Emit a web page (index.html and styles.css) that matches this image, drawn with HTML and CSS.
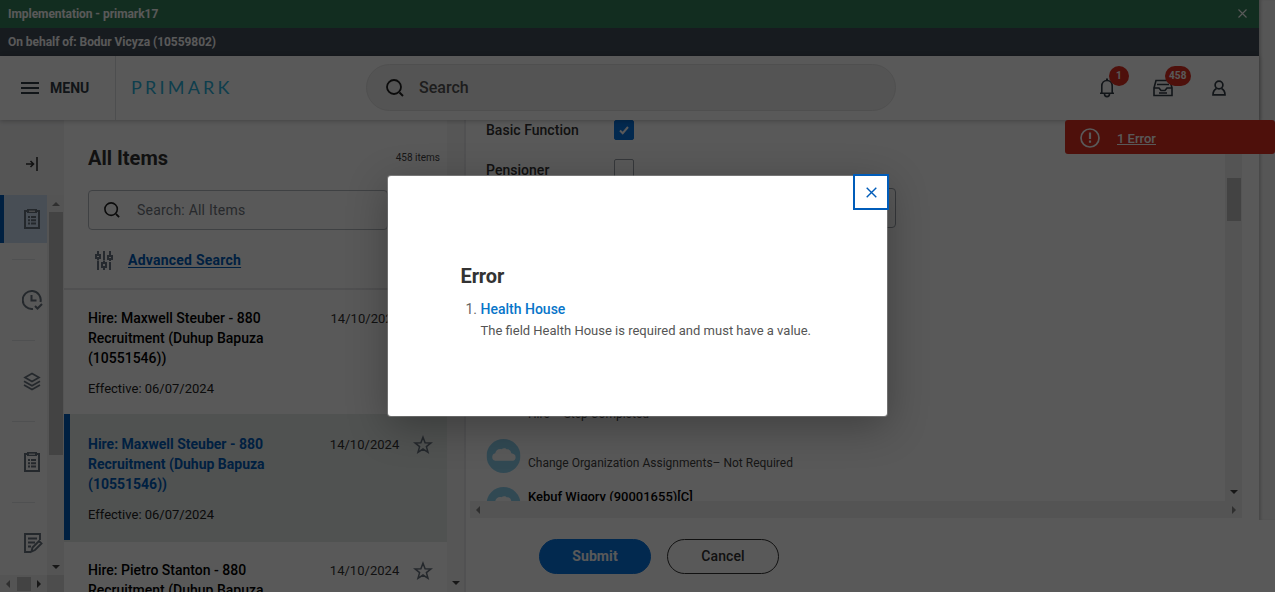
FILE: index.html
```html
<!DOCTYPE html>
<html lang="en">
<head>
<meta charset="utf-8">
<title>All Items</title>
<link rel="stylesheet" href="styles.css">
</head>
<body>
<svg class="defs" width="0" height="0">
  <symbol id="clipboard" viewBox="0 0 18 22"><path fill="none" stroke="currentColor" stroke-width="2" d="M2 3h14v17H2z"/><path fill="currentColor" d="M4 1h10v4H4zM5 8h2v2H5zM8 8h5v2H8zM5 11.3h2v2H5zM8 11.3h5v2H8zM5 14.6h2v2H5zM8 14.6h5v2H8z"/><path stroke="#fff" stroke-width="1" d="M6 3.2h6"/></symbol>
  <symbol id="star" viewBox="0 0 20 20"><path fill="none" stroke="currentColor" stroke-width="1.5" stroke-linejoin="miter" d="M10 2.200l2.100 5.500 5.900.2-4.600 3.700 1.600 5.700-5-3.300-5 3.300 1.600-5.700L2 7.900l5.900-.2z"/></symbol>
  <symbol id="lens" viewBox="0 0 18 18"><circle cx="8" cy="8" r="7" fill="none" stroke="currentColor" stroke-width="1.800"/><path stroke="currentColor" stroke-width="2" d="M13.500 13.500l3.500 3.500"/></symbol>
  <symbol id="cloud" viewBox="0 0 35 35"><circle cx="17.500" cy="17.500" r="17.500" fill="#8ed0ee"/><path fill="#fff" d="M9 22.500a4 4 0 0 1 0-7.800c.3-3 3.500-5.300 6.500-4.200 1.500-1.300 4-1.600 5.600.2 2.600-.3 4.300 1.400 4.400 4 2.600.2 4.500 1.700 4.500 4 0 2.200-1.600 3.800-4 3.800z"/></symbol>
</svg>
<div class="page">
  <div class="app">
    <div class="bar env"><span>Implementation - primark17</span><svg width="9" height="9" viewBox="0 0 9 9"><path stroke="#fff" stroke-width="1.100" d="M.5.5l8 8M8.500.5l-8 8"/></svg></div>
    <div class="bar behalf"><span>On behalf of: Bodur Vicyza (10559802)</span></div>
    <header class="header">
      <div class="menu"><svg width="18" height="12"><path stroke="#333c46" stroke-width="2" d="M0 1h18M0 6h18M0 11h18"/></svg><span>MENU</span></div>
      <div class="logo">PRIMARK</div>
      <div class="search"><svg width="18" height="18"><use href="#lens"/></svg><span>Search</span></div>
      <div class="actions">
        <div class="action"><svg width="16" height="20" viewBox="0 0 16 20"><path fill="none" stroke="currentColor" stroke-width="1.600" d="M1 15.300h14M2.800 15V8c0-3.200 2.200-5.500 5.200-5.500s5.200 2.300 5.200 5.500v7"/><path fill="none" stroke="currentColor" stroke-width="1.600" d="M5.500 16c0 3.500 5 3.500 5 0"/><path fill="currentColor" d="M7 .5h2v2H7z"/></svg><b class="badge one">1</b></div>
        <div class="action"><svg width="20" height="18" viewBox="0 0 20 18"><path fill="none" stroke="currentColor" stroke-width="1.600" d="M1 9h5l2 2.500h4L14 9h5v7.500H1zM1 9l2-7.500h14L19 9M4 5.500h12M6 14h8"/></svg><b class="badge">458</b></div>
        <div class="action"><svg width="14" height="17" viewBox="0 0 14 17"><circle cx="7" cy="5" r="3.900" fill="none" stroke="currentColor" stroke-width="1.700"/><path fill="none" stroke="currentColor" stroke-width="1.700" d="M4.500 8.500C2.500 9.500 1 11.500 1 14.800h12c0-3.300-1.500-5.300-3.500-6.300"/></svg></div>
      </div>
    </header>
    <div class="body">
      <nav class="nav">
        <div class="collapse"><svg width="12" height="14" viewBox="0 0 12 14"><path fill="none" stroke="#333" stroke-width="1.600" d="M0 7h7M4.500 4l3 3-3 3M11 0v14"/></svg></div>
        <div class="navmid">
          <div class="tabs">
            <div class="tab on"><svg width="18" height="22"><use href="#clipboard"/></svg></div>
            <div class="tab wide"><svg width="21" height="22" viewBox="0 0 21 22"><path fill="none" stroke="currentColor" stroke-width="2" d="M11 19.900A9 9 0 1 1 18.500 13M9.500 6v5.500h5M13 17l2.500 2.500L20 15"/></svg></div>
            <div class="tab"><svg width="18" height="19" viewBox="0 0 18 19"><path fill="none" stroke="currentColor" stroke-width="1.700" d="M9 1.500l7 4-7 4-7-4zM1 9.300l8 4.500 8-4.500M1 13l8 4.500 8-4.500"/></svg></div>
            <div class="tab"><svg width="18" height="22"><use href="#clipboard"/></svg></div>
            <div class="tab wide"><svg width="20" height="22" viewBox="0 0 20 22"><path fill="none" stroke="currentColor" stroke-width="1.900" d="M17 8V2H2v18h6M5 6.500h9M5 10.500h7M5 14.500h3M8.500 19.500l1-4 6.500-6.500 2.500 2.500-6.500 6.500z"/></svg></div>
          </div>
          <div class="vscroll"><i class="up"></i><div class="thumb"></div><i class="down"></i></div>
        </div>
        <div class="hscroll"><i class="left"></i><div class="hthumb"></div><i class="right"></i><div class="corner"></div></div>
      </nav>
      <section class="items">
        <div class="list">
          <div class="top">
            <div class="title"><h2>All Items</h2><small>458 items</small></div>
            <div class="find"><svg width="16" height="16"><use href="#lens"/></svg><span>Search: All Items</span></div>
            <div class="adv"><svg width="18" height="19" viewBox="0 0 18 19"><path fill="none" stroke="#6b7784" stroke-width="2" d="M3 0v3M3 8v1.500M9 0v9M15 0v4M15 9v1M3 10v9M9 17v2M9 9.500v2M15 11v8M1 4h4v3H1zM7 12h4v4H7zM13 5h4v3h-4z"/></svg><a>Advanced Search</a></div>
          </div>
          <article class="item first"><div class="row"><h3>Hire: Maxwell Steuber - 880 Recruitment (Duhup Bapuza (10551546))</h3><time>14/10/2024</time></div><p>Effective: 06/07/2024</p></article>
          <article class="item sel"><div class="row"><h3>Hire: Maxwell Steuber - 880 Recruitment (Duhup Bapuza (10551546))</h3><time>14/10/2024</time><svg width="20" height="20"><use href="#star"/></svg></div><p>Effective: 06/07/2024</p></article>
          <article class="item"><div class="row"><h3>Hire: Pietro Stanton - 880 Recruitment (Duhup Bapuza (10551546))</h3><time>14/10/2024</time><svg width="20" height="20"><use href="#star"/></svg></div></article>
        </div>
        <div class="listscroll"><i class="down"></i></div>
      </section>
      <main class="main">
        <div class="formwrap">
          <div class="form">
            <div class="field"><label>Basic Function</label><div class="check checked"><svg width="10" height="9" viewBox="0 0 10 9"><path fill="none" stroke="#fff" stroke-width="2" d="M1 4.500l2.700 2.700L9 1"/></svg></div></div>
            <div class="field"><label>Pensioner</label><div class="check"></div></div>
            <div class="input"></div>
            <div class="process">
              <p class="done">Hire – Step Completed</p>
              <div class="step"><svg width="35" height="34" viewBox="0 0 35 35"><use href="#cloud"/></svg><span>Change Organization Assignments– Not Required</span></div>
              <div class="step next"><svg width="35" height="34" viewBox="0 0 35 35"><use href="#cloud"/></svg><b>Kebuf Wigory (90001655)[C]</b></div>
            </div>
          </div>
          <div class="formscroll"><div class="formthumb"></div><i class="down"></i></div>
        </div>
        <div class="formh"><i class="left"></i><i class="right"></i></div>
        <footer class="footer"><button class="submit">Submit</button><button class="cancel">Cancel</button></footer>
      </main>
    </div>
  </div>
  <div class="gutter"></div>
  <div class="errorpill"><svg width="20" height="20" viewBox="0 0 20 20"><circle cx="10" cy="10" r="9" fill="none" stroke="#fff" stroke-width="1.700"/><path stroke="#fff" stroke-width="2.200" d="M10 4.500v6.500M10 12.500v2.300"/></svg><a>1 Error</a></div>
  <div class="overlay">
    <div class="dialog">
      <div class="close"><svg width="11" height="11" viewBox="0 0 11 11"><path stroke="#005cb9" stroke-width="1.400" d="M.7.7l9.600 9.600M10.300.7L.7 10.300"/></svg></div>
      <h1>Error</h1>
      <div class="err"><span class="num">1.</span><div><a>Health House</a><p>The field Health House is required and must have a value.</p></div></div>
    </div>
  </div>
</div>
</body>
</html>
```
FILE: styles.css
```css
* { box-sizing: border-box; }
body { margin: 0; font-family: Roboto, "Liberation Sans", sans-serif; color: #333; overflow: hidden; }
h1, h2, h3, p { margin: 0; }
svg { display: block; flex: none; }
.defs { position: absolute; }
.page { position: relative; display: flex; width: 1275px; height: 592px; overflow: hidden; background: #fff; }
.app { width: 1259px; height: 592px; display: flex; flex-direction: column; }
.bar { height: 28px; flex: none; display: flex; align-items: center; justify-content: space-between; padding: 0 12px 0 8px; color: #fff; font-size: 12px; font-weight: 700; letter-spacing: -.05px; }
.bar svg { margin-top: -2px; }
.env { background: #36815c; }
.behalf { background: #424d59; }
.header { height: 64px; flex: none; display: flex; align-items: center; background: #fff; box-shadow: 0 1px 5px rgba(0,0,0,.25); position: relative; z-index: 1; }
.menu { width: 116px; height: 64px; border-right: 1px solid #dcdfe3; display: flex; align-items: center; gap: 11px; padding-left: 21px; font-size: 14px; font-weight: 700; color: #333c46; }
.logo { width: 250px; padding: 0 0 2px 15px; font-family: Lato, sans-serif; font-size: 18px; letter-spacing: 3.2px; color: #2bb3dc; }
.search { width: 530px; height: 47px; margin-top: -1px; border: 1px solid #e3e3e3; border-radius: 24px; background: #f0f0f0; display: flex; align-items: center; gap: 15px; padding-left: 19px; font-size: 16px; font-weight: 500; color: #555; }
.search svg { color: #222; }
.search span { padding-bottom: 1px; }
.actions { margin-left: auto; display: flex; padding-right: 12.5px; color: #333c46; }
.action { position: relative; width: 56px; height: 56px; display: flex; align-items: center; justify-content: center; }
.badge { position: absolute; left: 30.5px; top: 6px; height: 20px; min-width: 20px; padding: 0 4px; border-radius: 10px; background: #de2e21; color: #fff; font-size: 10px; line-height: 20px; text-align: center; letter-spacing: .1px; }
.body { flex: 1; display: flex; min-height: 0; }
.nav { width: 64px; display: flex; flex-direction: column; background: #fbfbfb; }
.collapse { height: 75px; flex: none; display: flex; align-items: center; padding: 13px 0 0 26px; background: #f3f3f4; }
.navmid { height: 380px; display: flex; overflow: hidden; }
.tabs { width: 47px; }
.tab { height: 48px; margin-bottom: 33px; display: flex; align-items: center; justify-content: flex-end; color: #68727e; padding-right: 6px; position: relative; }
.tab::before { content: ""; position: absolute; left: 12px; bottom: -17px; width: 23px; height: 1px; background: #e3e5e8; }
.wide { padding-right: 4px; }
.on { background: #cfdff2; border-left: 4px solid #005cb9; }
.on::before { left: 8px; }
.vscroll { width: 17px; background: #efefef; display: flex; flex-direction: column; align-items: center; padding-top: 7px; }
.thumb { width: 14px; height: 243px; background: #c1c1c1; margin-top: 6px; }
i { display: block; width: 0; height: 0; border: 4px solid transparent; }
.up { border-top: 0; border-bottom-color: #888; }
.down { border-bottom: 0; border-top-color: #444; }
.left { border-left: 0; border-right-color: #888; }
.right { border-right: 0; border-left-color: #444; }
.vscroll .down { margin-top: 110px; }
.hscroll { flex: 1; display: flex; align-items: center; background: #efefef; padding-left: 6px; }
.hthumb { width: 14px; height: 14px; background: #c1c1c1; margin: 0 6px 0 7px; }
.corner { width: 17px; height: 17px; margin-left: auto; background: #dcdcdc; }
.items { width: 402px; display: flex; background: #fff; overflow: hidden; border-right: 2px solid #e9e9ec; }
.list { width: 383px; flex: none; }
.top { height: 170px; padding: 26px 0 0 24px; border-bottom: 2px solid #e4e6e9; }
.title { width: 352px; display: flex; justify-content: space-between; align-items: center; height: 24px; }
.title h2 { font-size: 20px; font-weight: 700; }
.title small { font-size: 10px; letter-spacing: 0; padding-bottom: 1px; color: #444; }
.find { margin-top: 20px; width: 300px; height: 40px; border: 1px solid #b5bac0; border-radius: 4px; display: flex; align-items: center; gap: 17px; padding-left: 15px; font-size: 14px; letter-spacing: .22px; color: #6f767e; }
.find svg { color: #222; }
.adv { display: flex; align-items: center; gap: 15px; margin-top: 20px; padding-left: 7px; height: 20px; }
.adv a { font-size: 14px; font-weight: 700; letter-spacing: .23px; color: #005cb9; text-decoration: underline; text-underline-offset: 2px; }
.item { height: 126px; padding: 18px 14px 0 24px; }
.first { height: 124px; }
.sel { height: 128px; background: linear-gradient(90deg, #005cb9 6px, transparent 6px) 0 0 / 100% 126px no-repeat, #e5eae9; padding-top: 20px; }
.row { display: flex; align-items: flex-start; }
.item h3 { width: 242.500px; padding-right: 50px; font-size: 14px; line-height: 20px; font-weight: 500; color: #000; }
.item.sel h3 { color: #005cb9; font-weight: 700; }
.item time { width: 83.500px; font-size: 13px; line-height: 20px; letter-spacing: .03px; color: #333; padding-top: 1px; }
.row svg { color: #68727e; margin-top: 1px; }
.item p { margin-top: 11px; font-size: 13px; line-height: 20px; color: #222; }
.listscroll { flex: 1; background: #f7f7f7; display: flex; align-items: flex-end; justify-content: center; padding-bottom: 7px; }
.main { flex: 1; display: flex; flex-direction: column; padding-left: 4px; }
.formwrap { height: 381px; display: flex; flex: none; }
.form { width: 755px; padding-left: 16px; overflow: hidden; }
.field { display: flex; align-items: flex-start; height: 40px; font-size: 14px; font-weight: 500; letter-spacing: .03px; }
.field label { width: 128px; line-height: 20px; }
.check { width: 20px; height: 20px; margin-top: -1px; border: 1px solid #9aa1a9; border-radius: 2px; display: flex; align-items: center; justify-content: center; }
.checked { background: #0875e1; border-color: #0875e1; margin-top: 0; }
.input { width: 410px; height: 40px; margin-top: -12px; border: 1px solid #9aa1a9; border-radius: 4px; }
.process { margin-top: 176px; font-size: 12px; color: #444; }
.process p { padding-left: 42px; line-height: 20px; height: 35px; }
.step { display: flex; gap: 7px; height: 48px; align-items: flex-start; }
.step span { line-height: 20px; margin-top: 14px; }
.step b { color: #000; font-weight: 500; font-size: 13px; line-height: 20px; letter-spacing: 0; }
.formscroll { width: 17px; background: #efefef; display: flex; flex-direction: column; align-items: center; }
.formthumb { width: 14px; height: 43px; margin-top: 58px; background: #c1c1c1; }
.formscroll .down { margin-top: auto; margin-bottom: 7px; }
.formh { width: 772px; height: 17px; background: #efefef; display: flex; align-items: center; justify-content: space-between; padding: 0 6px; }
.formh .right { border-left-color: #888; }
.footer { flex: 1; display: flex; gap: 16px; padding: 21px 0 0 69px; }
.footer button { width: 112px; height: 35px; border-radius: 18px; border: 1px solid #333; background: #fff; color: #333; font: 500 14px Roboto, sans-serif; letter-spacing: .1px; padding: 0 0 2px; }
.footer .submit { background: #0875e1; border-color: #0875e1; color: #fff; font-weight: 700; }
.gutter { width: 16px; height: 520px; background: #f7f7f7; box-shadow: inset 3px 0 3px -1px rgba(0,0,0,.18); }
.errorpill { position: absolute; z-index: 2; right: 0; top: 120px; width: 210px; height: 34px; border-radius: 3px; background: #de2e21; display: flex; align-items: center; gap: 17px; padding: 1px 0 0 15px; color: #fff; font-size: 13px; text-decoration: underline; }
.errorpill a { font-weight: 500; padding-top: 2px; }
.overlay { position: absolute; z-index: 3; inset: 0; background: rgba(0,0,0,.65); display: flex; justify-content: center; align-items: center; }
.dialog { position: relative; width: 499px; height: 240px; background: #fff; border-radius: 3px; box-shadow: 0 10px 40px rgba(0,0,0,.3), 0 0 0 1px rgba(170,170,170,.5); padding: 86px 72px 0 72.500px; }
.close { position: absolute; right: -2px; top: -2px; width: 36px; height: 36px; border: 2px solid #005cb9; background: #fff; display: flex; align-items: center; justify-content: center; }
.dialog h1 { font-size: 20px; line-height: 28px; font-weight: 700; letter-spacing: -.1px; }
.err { display: flex; margin-top: 9px; font-size: 14px; line-height: 20px; color: #666; }
.num { width: 20px; padding-left: 5px; }
.err a { color: #0875c9; font-weight: 500; }
.err p { font-size: 13px; line-height: 20px; margin-top: 2px; color: #555; white-space: nowrap; }
```
